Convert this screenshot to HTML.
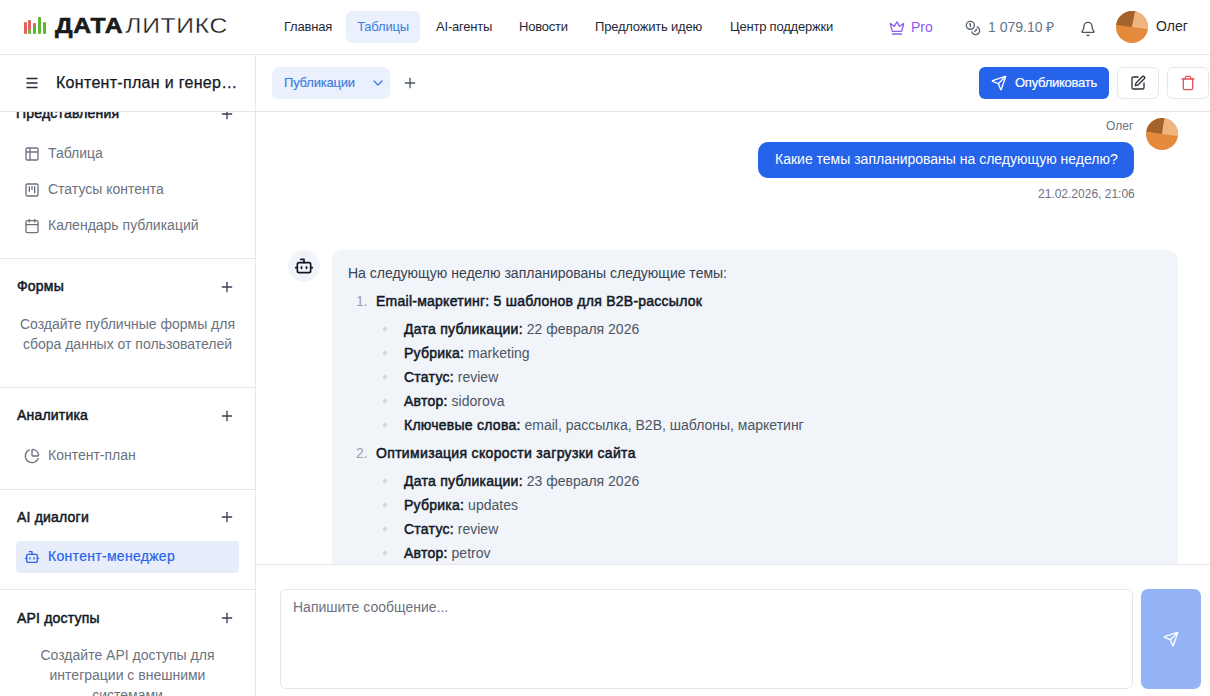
<!DOCTYPE html>
<html><head><meta charset="utf-8">
<style>
*{box-sizing:border-box;margin:0;padding:0}
html,body{width:1210px;height:696px;overflow:hidden;background:#fff;font-family:"Liberation Sans",sans-serif;color:#111827;position:relative}
.abs{position:absolute}
.t{position:absolute;white-space:nowrap;line-height:1}
svg{position:absolute;display:block}
.nav{position:absolute;top:11px;height:32px;font-size:13px;letter-spacing:-0.2px;color:#1f2937;line-height:32px;white-space:nowrap}
.hl{position:absolute;height:1px;background:#e5e7eb}
.vl{position:absolute;width:1px;background:#e5e7eb}
.sh{font-size:14px;font-weight:400;color:#111827;-webkit-text-stroke:0.5px #111827;letter-spacing:0.2px}
.si{font-size:14px;color:#6b7280}
.sd{font-size:14px;color:#6b7280;text-align:center;line-height:20px;white-space:normal}
.b{font-weight:400;color:#111827;-webkit-text-stroke:0.5px #111827;letter-spacing:0.25px}
.li{position:absolute;font-size:14px;color:#4b5563;white-space:nowrap;line-height:1}
.dot{position:absolute;width:4px;height:4px;background:#d1d5db;border-radius:50%}
</style></head>
<body>
<!-- HEADER -->
<div class="hl" style="left:0;top:54px;width:1210px"></div>
<div class="abs" style="left:24px;top:22px;width:3px;height:12px;background:#e4625e;border-radius:1px"></div>
<div class="abs" style="left:28px;top:20px;width:3.2px;height:14px;background:linear-gradient(#e4625e 72%,#72b83e 72%);border-radius:1px"></div>
<div class="abs" style="left:33px;top:23px;width:3px;height:11px;background:linear-gradient(#e4625e 32%,#5cb833 32%);border-radius:1px"></div>
<div class="abs" style="left:38px;top:17px;width:3px;height:17px;background:#5cb833;border-radius:1px"></div>
<div class="abs" style="left:42.7px;top:22px;width:3px;height:12px;background:#5cb833;border-radius:1px"></div>
<div class="t" style="left:55px;top:15px;font-size:22px;color:#1a1a1a;letter-spacing:0.6px;transform:scaleX(1.12);transform-origin:0 0"><b style="-webkit-text-stroke:0.6px #1a1a1a">ДАТА</b><span style="-webkit-text-stroke:0.3px #fff;margin-left:2px">ЛИТИКС</span></div>

<div class="nav" style="left:284px">Главная</div>
<div class="nav" style="left:346px;width:74px;text-align:center;background:#eaf0fd;border-radius:6px;color:#3b7ddd">Таблицы</div>
<div class="nav" style="left:436px">AI-агенты</div>
<div class="nav" style="left:519px">Новости</div>
<div class="nav" style="left:595px">Предложить идею</div>
<div class="nav" style="left:730px">Центр поддержки</div>

<svg style="left:889px;top:20px" width="16" height="16" viewBox="0 0 24 24" fill="none" stroke="#8b5cf6" stroke-width="2" stroke-linecap="round" stroke-linejoin="round"><path d="M11.562 3.266a.5.5 0 0 1 .876 0L15.39 8.87a1 1 0 0 0 1.516.294L21.183 5.5a.5.5 0 0 1 .798.519l-2.834 10.246a1 1 0 0 1-.956.734H5.81a1 1 0 0 1-.957-.734L2.02 6.02a.5.5 0 0 1 .798-.519l4.276 3.664a1 1 0 0 0 1.516-.294z"/><path d="M5 21h14"/></svg>
<div class="t" style="left:911px;top:20px;font-size:14px;color:#8b5cf6">Pro</div>

<svg style="left:965px;top:20px" width="16" height="16" viewBox="0 0 24 24" fill="none" stroke="#556070" stroke-width="2" stroke-linecap="round" stroke-linejoin="round"><circle cx="8" cy="8" r="6"/><path d="M18.09 10.37A6 6 0 1 1 10.34 18"/><path d="M7 6h1v4"/><path d="m16.71 13.88.7.71-2.82 2.82"/></svg>
<div class="t" style="left:988px;top:20px;font-size:14px;color:#64748b">1 079.10 ₽</div>

<svg style="left:1080px;top:21px" width="16" height="16" viewBox="0 0 24 24" fill="none" stroke="#4b5563" stroke-width="2" stroke-linecap="round" stroke-linejoin="round"><path d="M10.268 21a2 2 0 0 0 3.464 0"/><path d="M3.262 15.326A1 1 0 0 0 4 17h16a1 1 0 0 0 .74-1.673C19.41 13.956 18 12.499 18 8A6 6 0 0 0 6 8c0 4.499-1.411 5.956-2.738 7.326"/></svg>

<svg style="left:1116px;top:11px" width="32" height="32" viewBox="0 0 32 32"><circle cx="16" cy="16" r="16" fill="#e48a3a"/><path d="M16 16 L0.2 13.7 A16 16 0 0 1 19.2 0.3 Z" fill="#a3632b"/><path d="M16 16 L19.2 0.3 A16 16 0 0 1 31.8 18.3 Z" fill="#f0b57e"/></svg>
<div class="t" style="left:1156px;top:19px;font-size:14px;color:#1f2937">Олег</div>

<!-- SIDEBAR -->
<div class="vl" style="left:255px;top:55px;height:641px"></div>
<div class="hl" style="left:0;top:111px;width:1210px"></div>
<svg style="left:26px;top:77px" width="12" height="12" viewBox="0 0 12 12" stroke="#1f2937" stroke-width="1.4"><path d="M0.5 1.5 H11.5 M0.5 6 H11.5 M0.5 10.5 H11.5"/></svg>
<div class="t" style="left:56px;top:75px;font-size:16px;letter-spacing:0.3px;color:#111827;-webkit-text-stroke:0.25px #111827">Контент-план и генер…</div>

<div class="abs" style="left:0;top:112px;width:255px;height:584px;overflow:hidden">
  <div class="t sh" style="left:16px;top:-6px">Представления</div>
  <svg style="left:219px;top:-6px" width="16" height="16" viewBox="0 0 24 24" fill="none" stroke="#374151" stroke-width="2" stroke-linecap="round" stroke-linejoin="round"><path d="M5 12h14"/><path d="M12 5v14"/></svg>
</div>
<svg style="left:24px;top:146px" width="16" height="16" viewBox="0 0 24 24" fill="none" stroke="#6b7280" stroke-width="2" stroke-linecap="round" stroke-linejoin="round"><path d="M9 3H5a2 2 0 0 0-2 2v4m6-6h10a2 2 0 0 1 2 2v4M9 3v18m0 0h10a2 2 0 0 0 2-2V9M9 21H5a2 2 0 0 1-2-2V9m0 0h18"/></svg>
<div class="t si" style="left:48px;top:146px">Таблица</div>
<svg style="left:24px;top:182px" width="16" height="16" viewBox="0 0 24 24" fill="none" stroke="#6b7280" stroke-width="2" stroke-linecap="round" stroke-linejoin="round"><rect width="18" height="18" x="3" y="3" rx="2"/><path d="M8 7v7"/><path d="M12 7v4"/><path d="M16 7v9"/></svg>
<div class="t si" style="left:48px;top:182px">Статусы контента</div>
<svg style="left:24px;top:218px" width="16" height="16" viewBox="0 0 24 24" fill="none" stroke="#6b7280" stroke-width="2" stroke-linecap="round" stroke-linejoin="round"><path d="M8 2v4"/><path d="M16 2v4"/><rect width="18" height="18" x="3" y="4" rx="2"/><path d="M3 10h18"/></svg>
<div class="t si" style="left:48px;top:218px">Календарь публикаций</div>

<div class="hl" style="left:0;top:258px;width:255px"></div>
<div class="t sh" style="left:17px;top:279px">Формы</div>
<svg style="left:219px;top:279px" width="16" height="16" viewBox="0 0 24 24" fill="none" stroke="#374151" stroke-width="2" stroke-linecap="round" stroke-linejoin="round"><path d="M5 12h14"/><path d="M12 5v14"/></svg>
<div class="abs sd" style="left:0;top:314px;width:255px">Создайте публичные формы для<br>сбора данных от пользователей</div>

<div class="hl" style="left:0;top:387px;width:255px"></div>
<div class="t sh" style="left:17px;top:408px">Аналитика</div>
<svg style="left:219px;top:408px" width="16" height="16" viewBox="0 0 24 24" fill="none" stroke="#374151" stroke-width="2" stroke-linecap="round" stroke-linejoin="round"><path d="M5 12h14"/><path d="M12 5v14"/></svg>
<svg style="left:24px;top:448px" width="16" height="16" viewBox="0 0 24 24" fill="none" stroke="#6b7280" stroke-width="2" stroke-linecap="round" stroke-linejoin="round"><path d="M21 12c.552 0 1.005-.449.95-.998a10 10 0 0 0-8.953-8.951c-.55-.055-.998.398-.998.95v8a1 1 0 0 0 1 1z"/><path d="M21.21 15.89A10 10 0 1 1 8 2.83"/></svg>
<div class="t si" style="left:48px;top:448px">Контент-план</div>

<div class="hl" style="left:0;top:489px;width:255px"></div>
<div class="t sh" style="left:17px;top:510px">AI диалоги</div>
<svg style="left:219px;top:509px" width="16" height="16" viewBox="0 0 24 24" fill="none" stroke="#374151" stroke-width="2" stroke-linecap="round" stroke-linejoin="round"><path d="M5 12h14"/><path d="M12 5v14"/></svg>
<div class="abs" style="left:16px;top:541px;width:223px;height:32px;background:#e8edfc;border-radius:4px"></div>
<svg style="left:24px;top:549px" width="16" height="16" viewBox="0 0 24 24" fill="none" stroke="#2563eb" stroke-width="2" stroke-linecap="round" stroke-linejoin="round"><path d="M12 8V4H8"/><rect width="16" height="12" x="4" y="8" rx="2"/><path d="M2 14h2"/><path d="M20 14h2"/><path d="M15 13v2"/><path d="M9 13v2"/></svg>
<div class="t" style="left:48px;top:549px;font-size:14px;letter-spacing:0.3px;color:#2563eb;-webkit-text-stroke:0.2px #2563eb">Контент-менеджер</div>

<div class="hl" style="left:0;top:589px;width:255px"></div>
<div class="t sh" style="left:17px;top:611px">API доступы</div>
<svg style="left:219px;top:610px" width="16" height="16" viewBox="0 0 24 24" fill="none" stroke="#374151" stroke-width="2" stroke-linecap="round" stroke-linejoin="round"><path d="M5 12h14"/><path d="M12 5v14"/></svg>
<div class="abs sd" style="left:0;top:645px;width:255px;padding:0 30px">Создайте API доступы для интеграции с внешними системами</div>

<!-- TOOLBAR -->
<div class="abs" style="left:272px;top:67px;width:118px;height:32px;background:#eaf0fd;border-radius:7px"></div>
<div class="t" style="left:284px;top:76px;font-size:13px;letter-spacing:-0.2px;color:#3b7ddd;-webkit-text-stroke:0.15px #3b7ddd">Публикации</div>
<svg style="left:370px;top:75px" width="16" height="16" viewBox="0 0 24 24" fill="none" stroke="#3b7ddd" stroke-width="2" stroke-linecap="round" stroke-linejoin="round"><path d="m6 9 6 6 6-6"/></svg>
<svg style="left:402px;top:75px" width="16" height="16" viewBox="0 0 24 24" fill="none" stroke="#4b5563" stroke-width="2" stroke-linecap="round" stroke-linejoin="round"><path d="M5 12h14"/><path d="M12 5v14"/></svg>

<div class="abs" style="left:979px;top:67px;width:130px;height:32px;background:#2563eb;border-radius:6px"></div>
<svg style="left:991px;top:75px" width="16" height="16" viewBox="0 0 24 24" fill="none" stroke="#fff" stroke-width="2" stroke-linecap="round" stroke-linejoin="round"><path d="M14.536 21.686a.5.5 0 0 0 .937-.024l6.5-19a.496.496 0 0 0-.635-.635l-19 6.5a.5.5 0 0 0-.024.937l7.93 3.18a2 2 0 0 1 1.112 1.11z"/><path d="m21.854 2.147-10.94 10.939"/></svg>
<div class="t" style="left:1015px;top:76px;font-size:13px;letter-spacing:-0.25px;color:#fff;-webkit-text-stroke:0.2px #fff">Опубликовать</div>

<div class="abs" style="left:1117px;top:67px;width:42px;height:32px;border:1px solid #e5e7eb;border-radius:6px"></div>
<svg style="left:1130px;top:75px" width="16" height="16" viewBox="0 0 24 24" fill="none" stroke="#2b313c" stroke-width="2" stroke-linecap="round" stroke-linejoin="round"><path d="M12 3H5a2 2 0 0 0-2 2v14a2 2 0 0 0 2 2h14a2 2 0 0 0 2-2v-7"/><path d="M18.375 2.625a1 1 0 0 1 3 3l-9.013 9.014a2 2 0 0 1-.853.505l-2.873.84a.5.5 0 0 1-.62-.62l.84-2.873a2 2 0 0 1 .506-.852z"/></svg>
<div class="abs" style="left:1167px;top:67px;width:42px;height:32px;border:1px solid #e5e7eb;border-radius:6px"></div>
<svg style="left:1180px;top:75px" width="16" height="16" viewBox="0 0 24 24" fill="none" stroke="#e45454" stroke-width="2" stroke-linecap="round" stroke-linejoin="round"><path d="M3 6h18"/><path d="M19 6v14c0 1-1 2-2 2H7c-1 0-2-1-2-2V6"/><path d="M8 6V4c0-1 1-2 2-2h4c1 0 2 1 2 2v2"/></svg>

<!-- CHAT -->
<div class="t" style="left:1106px;top:120px;font-size:12px;color:#6b7280">Олег</div>
<svg style="left:1146px;top:118px" width="32" height="32" viewBox="0 0 32 32"><circle cx="16" cy="16" r="16" fill="#e48a3a"/><path d="M16 16 L0.3 13.5 A16 16 0 0 1 18.5 0.2 Z" fill="#a3632b"/><path d="M16 16 L18.5 0.2 A16 16 0 0 1 31.9 18 Z" fill="#f0b57e"/></svg>
<div class="abs" style="left:758px;top:142px;width:376px;height:36px;background:#2563eb;border-radius:10px"></div>
<div class="t" style="left:775px;top:152px;font-size:14px;color:#fff">Какие темы запланированы на следующую неделю?</div>
<div class="t" style="left:1038px;top:188px;font-size:12px;color:#6b7280">21.02.2026, 21:06</div>

<div class="abs" style="left:288px;top:250px;width:32px;height:32px;background:#f1f4f8;border-radius:50%"></div>
<svg style="left:294px;top:256px" width="20" height="20" viewBox="0 0 24 24" fill="none" stroke="#111827" stroke-width="2" stroke-linecap="round" stroke-linejoin="round"><path d="M12 8V4H8"/><rect width="16" height="12" x="4" y="8" rx="2"/><path d="M2 14h2"/><path d="M20 14h2"/><path d="M15 13v2"/><path d="M9 13v2"/></svg>

<div class="abs" style="left:332px;top:250px;width:846px;height:314px;background:#f1f4f9;border-radius:10px 10px 0 0;overflow:hidden">
</div>
<div class="abs" style="left:256px;top:112px;width:954px;height:452px;overflow:hidden">
  <div class="t" style="left:92px;top:154px;font-size:14px;color:#374151">На следующую неделю запланированы следующие темы:</div>
  <div class="t" style="left:100px;top:182px;font-size:14px;color:#9aa1ab">1.</div>
  <div class="t b" style="left:120px;top:182px;font-size:14px">Email-маркетинг: 5 шаблонов для B2B-рассылок</div>
  <div class="dot" style="left:127px;top:215px"></div><div class="li" style="left:148px;top:210px"><span class="b">Дата публикации:</span> 22 февраля 2026</div>
  <div class="dot" style="left:127px;top:239px"></div><div class="li" style="left:148px;top:234px"><span class="b">Рубрика:</span> marketing</div>
  <div class="dot" style="left:127px;top:263px"></div><div class="li" style="left:148px;top:258px"><span class="b">Статус:</span> review</div>
  <div class="dot" style="left:127px;top:287px"></div><div class="li" style="left:148px;top:282px"><span class="b">Автор:</span> sidorova</div>
  <div class="dot" style="left:127px;top:311px"></div><div class="li" style="left:148px;top:306px"><span class="b">Ключевые слова:</span> email, рассылка, B2B, шаблоны, маркетинг</div>
  <div class="t" style="left:100px;top:334px;font-size:14px;color:#9aa1ab">2.</div>
  <div class="t b" style="left:120px;top:334px;font-size:14px;letter-spacing:0.33px">Оптимизация скорости загрузки сайта</div>
  <div class="dot" style="left:127px;top:367px"></div><div class="li" style="left:148px;top:362px"><span class="b">Дата публикации:</span> 23 февраля 2026</div>
  <div class="dot" style="left:127px;top:391px"></div><div class="li" style="left:148px;top:386px"><span class="b">Рубрика:</span> updates</div>
  <div class="dot" style="left:127px;top:415px"></div><div class="li" style="left:148px;top:410px"><span class="b">Статус:</span> review</div>
  <div class="dot" style="left:127px;top:439px"></div><div class="li" style="left:148px;top:434px"><span class="b">Автор:</span> petrov</div>
</div>

<!-- INPUT -->
<div class="hl" style="left:256px;top:564px;width:954px"></div>
<div class="abs" style="left:280px;top:589px;width:853px;height:100px;border:1px solid #e5e7eb;border-radius:6px"></div>
<div class="t" style="left:293px;top:600px;font-size:14px;color:#6b7280">Напишите сообщение...</div>
<div class="abs" style="left:1141px;top:589px;width:60px;height:100px;background:#93b3f4;border-radius:7px"></div>
<svg style="left:1163px;top:631px" width="16" height="16" viewBox="0 0 24 24" fill="none" stroke="#fff" stroke-width="2" stroke-linecap="round" stroke-linejoin="round"><path d="M14.536 21.686a.5.5 0 0 0 .937-.024l6.5-19a.496.496 0 0 0-.635-.635l-19 6.5a.5.5 0 0 0-.024.937l7.93 3.18a2 2 0 0 1 1.112 1.11z"/><path d="m21.854 2.147-10.94 10.939"/></svg>
</body></html>
